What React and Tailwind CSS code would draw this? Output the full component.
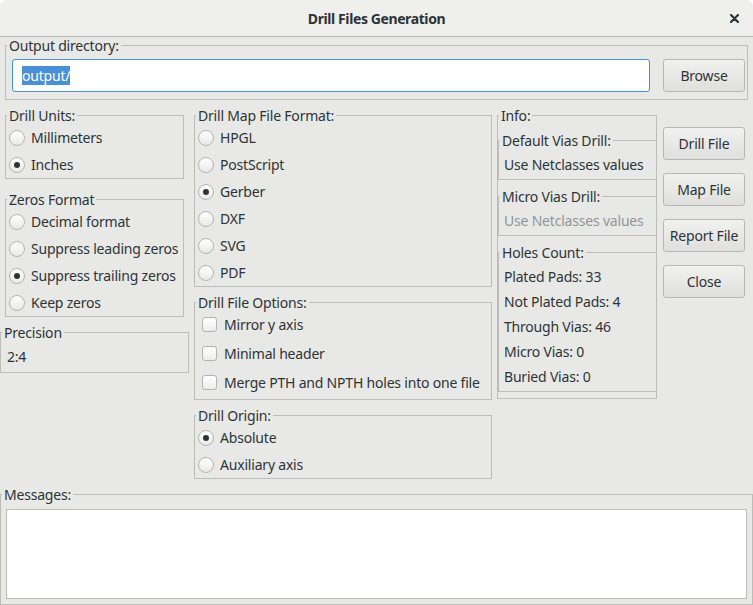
import React from "react";

function Group({ label, className = "", children }) {
  return (
    <fieldset className={`min-w-0 border border-[#bcbcb9] ${className}`}>
      <legend className="ml-[1px] px-[2px] leading-[17px]">{label}</legend>
      {children}
    </fieldset>
  );
}

function Radio({ label, checked }) {
  return (
    <div className="flex h-[27px] items-center pl-[3px]">
      <span className="flex h-[16px] w-[16px] items-center justify-center rounded-full border border-[#b3b3b0] bg-gradient-to-b from-white to-[#e9e9e8]">
        {checked && <span className="h-[6px] w-[6px] rounded-full bg-[#2e3436]" />}
      </span>
      <span className="ml-[6px] whitespace-nowrap">{label}</span>
    </div>
  );
}

function Check({ label }) {
  return (
    <div className="flex h-[29px] items-center pl-[7px]">
      <span className="h-[15px] w-[15px] rounded-[3px] border border-[#b3b3b0] bg-gradient-to-b from-white to-[#ececeb]" />
      <span className="ml-[7px] whitespace-nowrap">{label}</span>
    </div>
  );
}

function Button({ children, className = "" }) {
  return (
    <div
      className={`flex h-[33px] items-center justify-center rounded-[3px] border border-[#b6b6b3] bg-gradient-to-b from-[#f1f1f0] to-[#dfdfdd] whitespace-nowrap ${className}`}
    >
      {children}
    </div>
  );
}

export default function App() {
  return (
    <div className="flex h-[605px] w-[753px] flex-col overflow-hidden rounded-t-[7px] bg-[#e8e8e7] font-['Noto_Sans',sans-serif] text-[14px] tracking-[-0.2px] text-[#2e3436]">
      {/* Title bar */}
      <div className="grid h-[37px] shrink-0 grid-cols-[1fr_auto_1fr] items-center border-b border-[#b8b8b5] bg-[#efefee]">
        <div />
        <div className="font-bold tracking-[-0.4px]">Drill Files Generation</div>
        <div className="flex justify-end pr-[14px]">
          <svg width="9" height="9" viewBox="0 0 9 9">
            <path d="M1 1 L8 8 M8 1 L1 8" stroke="#2e3436" strokeWidth="2.2" strokeLinecap="round" />
          </svg>
        </div>
      </div>

      {/* Output directory */}
      <Group label="Output directory:" className="mx-[5px] shrink-0">
        <div className="flex items-center pb-[7px] pl-[6px] pr-[2px] pt-[5px]">
          <div className="flex h-[33px] flex-1 items-center rounded-[3px] border border-[#4a90d9] bg-white pl-[9px]">
            <span className="bg-[#4a90d9] leading-[19px] text-white">output/</span>
          </div>
          <Button className="ml-[13px] w-[82px]">Browse</Button>
        </div>
      </Group>

      {/* Middle row */}
      <div className="mt-[7px] flex shrink-0 items-start">
        {/* Left column */}
        <div className="flex w-[189px] flex-col">
          <Group label="Drill Units:" className="mx-[5px]">
            <Radio label="Millimeters" />
            <Radio label="Inches" checked />
          </Group>
          <Group label="Zeros Format" className="mx-[5px] mt-[12px]">
            <Radio label="Decimal format" />
            <Radio label="Suppress leading zeros" />
            <Radio label="Suppress trailing zeros" checked />
            <Radio label="Keep zeros" />
          </Group>
          <Group label="Precision" className="mt-[7px]">
            <div className="flex h-[31px] items-center pl-[6px]">2:4</div>
          </Group>
        </div>

        {/* Middle column */}
        <div className="ml-[5px] flex w-[298px] flex-col">
          <Group label="Drill Map File Format:">
            <Radio label="HPGL" />
            <Radio label="PostScript" />
            <Radio label="Gerber" checked />
            <Radio label="DXF" />
            <Radio label="SVG" />
            <Radio label="PDF" />
          </Group>
          <Group label="Drill File Options:" className="mt-[7px]">
            <div className="-mt-[1px] pb-[2px]">
              <Check label="Mirror y axis" />
              <Check label="Minimal header" />
              <Check label="Merge PTH and NPTH holes into one file" />
            </div>
          </Group>
          <Group label="Drill Origin:" className="mt-[7px]">
            <Radio label="Absolute" checked />
            <Radio label="Auxiliary axis" />
          </Group>
        </div>

        {/* Info column */}
        <Group label="Info:" className="ml-[5px] w-[160px] pb-[6px]">
          <Group label="Default Vias Drill:" className="-mr-[1px] mt-[8px]">
            <div className="flex h-[30px] items-center whitespace-nowrap pl-[5px]">Use Netclasses values</div>
          </Group>
          <Group label="Micro Vias Drill:" className="-mr-[1px] mt-[8px]">
            <div className="flex h-[30px] items-center whitespace-nowrap pl-[5px] text-[#929595]">
              Use Netclasses values
            </div>
          </Group>
          <Group label="Holes Count:" className="-mr-[1px] mt-[8px]">
            <div className="pb-[2px] pl-[5px] pt-[3px]">
              <div className="flex h-[25px] items-center">Plated Pads: 33</div>
              <div className="flex h-[25px] items-center">Not Plated Pads: 4</div>
              <div className="flex h-[25px] items-center">Through Vias: 46</div>
              <div className="flex h-[25px] items-center">Micro Vias: 0</div>
              <div className="flex h-[25px] items-center">Buried Vias: 0</div>
            </div>
          </Group>
        </Group>

        {/* Buttons */}
        <div className="ml-[6px] mt-[20px] flex w-[82px] flex-col gap-[13px]">
          <Button>Drill File</Button>
          <Button>Map File</Button>
          <Button>Report File</Button>
          <Button>Close</Button>
        </div>
      </div>

      {/* Messages */}
      <Group label="Messages:" className="mt-[7px] shrink-0">
        <div className="px-[5px] pb-[5px] pt-[6px]">
          <div className="h-[90px] border border-[#bcbcb9] bg-white" />
        </div>
      </Group>
    </div>
  );
}
